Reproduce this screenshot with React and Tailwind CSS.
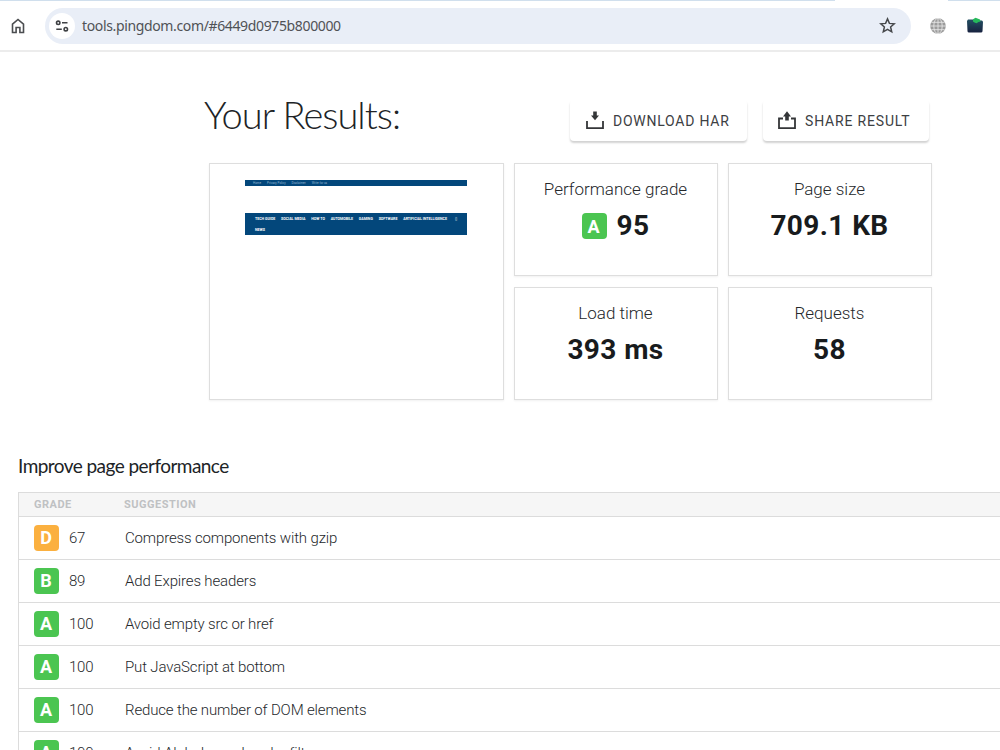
import React from 'react';

const metrics = [
  { label: 'Performance grade', value: '95', grade: 'A' },
  { label: 'Page size', value: '709.1 KB' },
  { label: 'Load time', value: '393 ms' },
  { label: 'Requests', value: '58' },
];

const suggestions = [
  { grade: 'D', score: 67, text: 'Compress components with gzip' },
  { grade: 'B', score: 89, text: 'Add Expires headers' },
  { grade: 'A', score: 100, text: 'Avoid empty src or href' },
  { grade: 'A', score: 100, text: 'Put JavaScript at bottom' },
  { grade: 'A', score: 100, text: 'Reduce the number of DOM elements' },
  { grade: 'A', score: 100, text: 'Avoid AlphaImageLoader filter' },
];

const siteMenu = ['TECH GUIDE', 'SOCIAL MEDIA', 'HOW TO', 'AUTOMOBILE', 'GAMING', 'SOFTWARE', 'ARTIFICIAL INTELLIGENCE'];

function Grade({ letter }) {
  const color = letter === 'D' ? 'bg-[#fbb03f]' : 'bg-[#4bc551]';
  return (
    <span className={`flex h-[26px] w-[25px] shrink-0 items-center justify-center rounded-[4px] pr-px text-[18px] font-bold text-white ${color}`}>
      {letter}
    </span>
  );
}

function BrowserBar() {
  return (
    <header className="h-[52px] border-b-2 border-[#ececec]">
      <div className="flex h-px justify-between">
        <div className="w-[835px] bg-[#d0dfed]" />
        <div className="w-[52px] bg-[#d0dfed]" />
      </div>
      <div className="flex h-[49px] items-center">
        <svg className="ml-[11px] h-[16px] w-[14px]" viewBox="0 0 14 16" fill="none" stroke="#4b4d50" strokeWidth="1.6">
          <path d="M1.5 6.2 7 1.5l5.500 4.700v8.300H8.900V9.500H5.100v5H1.500Z" />
        </svg>
        <div className="ml-[20px] flex h-[36px] w-[866px] items-center rounded-full bg-[#e9eef7] pl-[4px] pr-[15px]">
          <div className="flex h-[26px] w-[26px] items-center justify-center rounded-full bg-white">
            <svg className="h-[14px] w-[14px]" viewBox="0 0 14 14" fill="none" stroke="#3f4144" strokeWidth="1.6">
              <circle cx="3.200" cy="3.800" r="1.700" />
              <path d="M7 3.800h5.500M1.300 10.200h5.500" />
              <circle cx="10.800" cy="10.200" r="1.700" />
            </svg>
          </div>
          <span className="ml-[7px] whitespace-nowrap font-['Noto_Sans'] text-[14px] leading-[20px] tracking-[-0.36px] text-[#505256]">
            tools.pingdom.com/#6449d0975b800000
          </span>
          <svg className="ml-auto h-[17px] w-[17px]" viewBox="0 0 17 17" fill="none" stroke="#45474a" strokeWidth="1.500">
            <path d="m8.500 1.900 1.900 4.500 4.900.4-3.700 3.200 1.100 4.800-4.200-2.500-4.200 2.500L5.400 10 1.700 6.800l4.900-.4Z" />
          </svg>
        </div>
        <svg className="ml-[19px] h-[16px] w-[16px]" viewBox="0 0 16 16">
          <circle cx="8" cy="8" r="7.800" fill="#9b9b9b" />
          <g fill="none" stroke="#e4e4e4" strokeWidth="0.9">
            <path d="M8 0v16M0 8h16M1.300 4.300h13.400M1.300 11.700h13.400" />
            <ellipse cx="8" cy="8" rx="4.200" ry="7.800" />
          </g>
        </svg>
        <svg className="ml-[20px] h-[17px] w-[18px]" viewBox="0 0 18 17">
          <defs>
            <linearGradient id="folder" x1="0" y1="0" x2="0" y2="1">
              <stop offset="0" stopColor="#245063" />
              <stop offset="1" stopColor="#17213f" />
            </linearGradient>
          </defs>
          <path d="M2 2.600h5.500l1 .8h7.500l1 1.300-.5 9.500q-.1 1.300-1.500 1.300H3q-1.400 0-1.500-1.300L1 4Z" fill="url(#folder)" />
          <path d="M7 4.500V2.200L9.500.8l2 .6 2.500 1.200.5 2-2 .5-2 1.200L8.500 5.500Z" fill="#26b95b" />
        </svg>
      </div>
    </header>
  );
}

function TrayIcon({ up }) {
  return (
    <svg className="h-[20px] w-[20px]" viewBox="0 0 20 20" fill="none" stroke="#343638" strokeWidth="1.800">
      <path d={up ? 'M6 7.500H2v9.600h16V7.500h-4' : 'M2 10v7.100h16V10'} />
      {up ? (
        <path d="M10 .3 14 5.500h-2.200v4H8.200v-4H6Z" fill="#343638" stroke="none" />
      ) : (
        <path d="M10 9.300 6 4.500h2.200V.5h3.600v4H14Z" fill="#343638" stroke="none" />
      )}
    </svg>
  );
}

function SitePreview() {
  return (
    <div className="row-span-2 border border-[#dedede] px-[35px] pt-[16px] shadow-[0_1px_2px_rgba(0,0,0,0.06)]">
      <div className="flex h-[6px] w-[222px] items-center gap-[6px] bg-[#03477b] pl-[8px] text-[3px] leading-[6px] text-[#8fb2ce]">
        <span>Home</span>
        <span>Privacy Policy</span>
        <span>Disclaimer</span>
        <span>Write for us</span>
      </div>
      <div className="mt-[27px] h-[22px] w-[222px] bg-[#03477b] pl-[10px] pt-px text-[3.600px] font-bold leading-[11px] text-white">
        <div className="flex h-[11px] gap-[5.800px] whitespace-nowrap">
          {siteMenu.map((item) => (
            <span key={item}>{item}</span>
          ))}
          <span className="ml-[2px] font-normal">▯</span>
        </div>
        <div className="leading-[10px]">NEWS</div>
      </div>
    </div>
  );
}

export default function App() {
  return (
    <div className="h-[750px] w-[1000px] overflow-hidden bg-white font-[Roboto,sans-serif] text-[#25282b]">
      <BrowserBar />

      <section className="ml-[204px] w-[727px]">
        <div className="flex h-[111px] items-start pt-[48px]">
          <h1 className="mt-[-10px] w-[366px] whitespace-nowrap font-[Lato,sans-serif] text-[38px] font-light leading-[48px] tracking-[-1px] text-[#202326]">
            Your Results:
          </h1>
          <button className="flex h-[41px] w-[177px] items-center gap-[8px] rounded-[4px] pl-[15px] text-[14px] leading-[20px] tracking-[0.76px] text-[#3d4043] shadow-[0_2px_2px_rgba(0,0,0,0.18)]">
            <TrayIcon />
            <span className="whitespace-nowrap">DOWNLOAD HAR</span>
          </button>
          <button className="ml-[16px] flex h-[41px] w-[166px] items-center gap-[8px] rounded-[4px] pl-[14px] text-[14px] leading-[20px] tracking-[0.82px] text-[#3d4043] shadow-[0_2px_2px_rgba(0,0,0,0.18)]">
            <TrayIcon up />
            <span className="whitespace-nowrap">SHARE RESULT</span>
          </button>
        </div>

        <div className="ml-[5px] grid h-[237px] grid-cols-[295px_204px_204px] grid-rows-2 gap-x-[10px] gap-y-[11px]">
          <SitePreview />
          {metrics.map((m) => (
            <div key={m.label} className="border border-[#dedede] pr-px pt-[13px] text-center shadow-[0_1px_2px_rgba(0,0,0,0.06)]">
              <p className="text-[17px] font-light leading-[24px]">{m.label}</p>
              <div className="mt-[7px] flex h-[36px] items-center justify-center gap-[10px]">
                {m.grade && <Grade letter={m.grade} />}
                <span className="text-[28px] font-bold leading-[36px] tracking-[0.4px] text-[#181b1d]">{m.value}</span>
              </div>
            </div>
          ))}
        </div>
      </section>

      <section className="ml-[18px] mt-[53px]">
        <h2 className="font-[Lato,sans-serif] text-[19px] leading-[26px] tracking-[-0.55px] text-[#202326]">
          Improve page performance
        </h2>
        <div className="mt-[13px] border-l border-t border-[#dcdcdc]">
          <div className="flex h-[24px] items-center border-b border-[#dcdcdc] bg-[#f6f6f6] pl-[15px] pt-px text-[11px] font-bold tracking-[0.5px] text-[#bfc1c3]">
            <span className="w-[90px]">GRADE</span>
            <span>SUGGESTION</span>
          </div>
          {suggestions.map((row) => (
            <div key={row.text} className="flex h-[43px] items-center border-b border-[#dcdcdc] pl-[15px] text-[15px] leading-[20px]">
              <Grade letter={row.grade} />
              <span className="ml-[10px] w-[56px] font-light tracking-[-0.2px]">{row.score}</span>
              <span className="whitespace-nowrap font-light tracking-[-0.15px]">{row.text}</span>
            </div>
          ))}
        </div>
      </section>
    </div>
  );
}
